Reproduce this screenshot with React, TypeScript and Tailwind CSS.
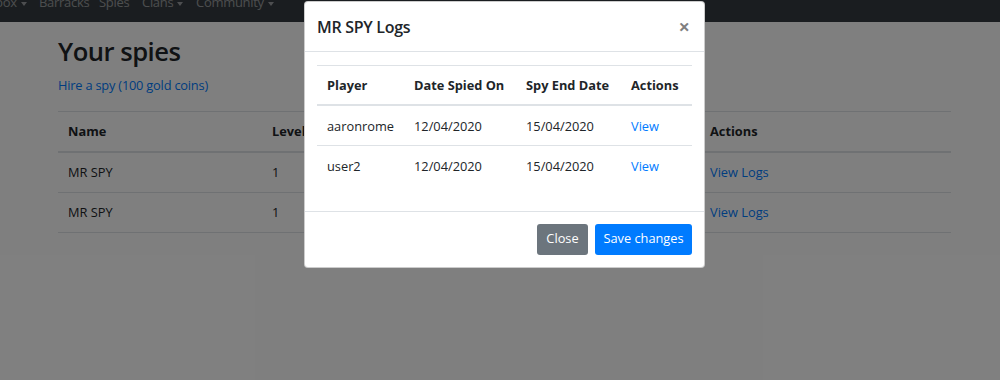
import React from "react";

const spies = [
  { name: "MR SPY", level: "1" },
  { name: "MR SPY", level: "1" },
];

const logs = [
  { player: "aaronrome", spied: "12/04/2020", end: "15/04/2020" },
  { player: "user2", spied: "12/04/2020", end: "15/04/2020" },
];

function Caret() {
  return <span className="inline-block ml-[4px] align-middle border-t-[4px] border-x-[3px] border-x-transparent border-t-current"></span>;
}

export default function App() {
  return (
    <div
      className="relative w-[1000px] h-[380px] overflow-hidden bg-white text-[#212529] text-[12.8px] leading-[1.5]"
      style={{ fontFamily: '"Open Sans", "Noto Sans", Arial, sans-serif' }}
    >
      {/* navbar, scrolled mostly out of view */}
      <div className="h-[22px] overflow-hidden bg-[#343a40]">
        <div className="flex pt-[1px] -mt-[8px] text-[13px] leading-[19px] text-white/50 tracking-[-0.3px]">
          <span className="-ml-[5px] w-[44px]">box<Caret /></span>
          <span className="w-[60px]">Barracks</span>
          <span className="w-[43px]">Spies</span>
          <span className="w-[54px]">Clans<Caret /></span>
          <span>Community<Caret /></span>
        </div>
      </div>

      {/* page content */}
      <div className="ml-[58px] w-[893px]">
        <h2 className="mt-[15px] text-[25.6px] font-semibold leading-[1.2] tracking-[-0.5px]">Your spies</h2>
        <a className="block mt-[8px] text-[#007bff] tracking-[-0.2px]">Hire a spy (100 gold coins)</a>
        <table className="w-full mt-[16px] border-t border-[#dee2e6] text-left">
          <thead>
            <tr className="border-b-2 border-[#dee2e6]">
              <th className="w-[204px] px-[10px] py-[10px] font-bold">Name</th>
              <th className="w-[438px] px-[10px] py-[10px] font-bold">Level</th>
              <th className="px-[10px] py-[10px] font-bold">Actions</th>
            </tr>
          </thead>
          <tbody>
            {spies.map((s, i) => (
              <tr key={i} className="border-b border-[#dee2e6]">
                <td className="px-[10px] py-[10px] text-[#212529]">{s.name}</td>
                <td className="px-[10px] py-[10px] text-[#212529]">{s.level}</td>
                <td className="px-[10px] py-[10px] text-[#007bff]">View Logs</td>
              </tr>
            ))}
          </tbody>
        </table>
      </div>

      {/* backdrop */}
      <div className="absolute inset-0 bg-black/50"></div>

      {/* modal */}
      <div className="absolute left-[304px] top-[1px] w-[401px] bg-white border border-black/20 rounded-[4px]">
        <div className="flex items-start justify-between px-[12px] pt-[13px] pb-[12px] border-b border-[#dee2e6]">
          <h5 className="text-[16px] font-semibold leading-[24px] tracking-[-0.3px]">MR SPY Logs</h5>
          <button className="text-[20px] font-bold leading-[24px] text-black/50 mr-[2px]">×</button>
        </div>
        <div className="px-[12px] pt-[13px] pb-[12px]">
          <table className="w-full border-t border-[#dee2e6] text-left mb-[13px]">
            <thead>
              <tr className="border-b-2 border-[#dee2e6]">
                <th className="w-[87px] px-[10px] pt-[10px] pb-[9px] font-bold">Player</th>
                <th className="w-[112px] px-[10px] pt-[10px] pb-[9px] font-bold">Date Spied On</th>
                <th className="w-[105px] px-[10px] pt-[10px] pb-[9px] font-bold">Spy End Date</th>
                <th className="px-[10px] pt-[10px] pb-[9px] font-bold">Actions</th>
              </tr>
            </thead>
            <tbody>
              {logs.map((l, i) => (
                <tr key={i} className={i === 0 ? "border-b border-[#dee2e6]" : ""}>
                  <td className="px-[10px] pt-[11px] pb-[9px]">{l.player}</td>
                  <td className="px-[10px] pt-[11px] pb-[9px]">{l.spied}</td>
                  <td className="px-[10px] pt-[11px] pb-[9px]">{l.end}</td>
                  <td className="px-[10px] pt-[11px] pb-[9px] text-[#007bff]">View</td>
                </tr>
              ))}
            </tbody>
          </table>
        </div>
        <div className="flex justify-end gap-[7px] px-[12px] pt-[12px] pb-[12px] border-t border-[#dee2e6]">
          <button className="h-[31px] w-[51px] rounded-[3px] bg-[#6c757d] text-white">Close</button>
          <button className="h-[31px] w-[97px] rounded-[3px] bg-[#007bff] text-white">Save changes</button>
        </div>
      </div>
    </div>
  );
}
